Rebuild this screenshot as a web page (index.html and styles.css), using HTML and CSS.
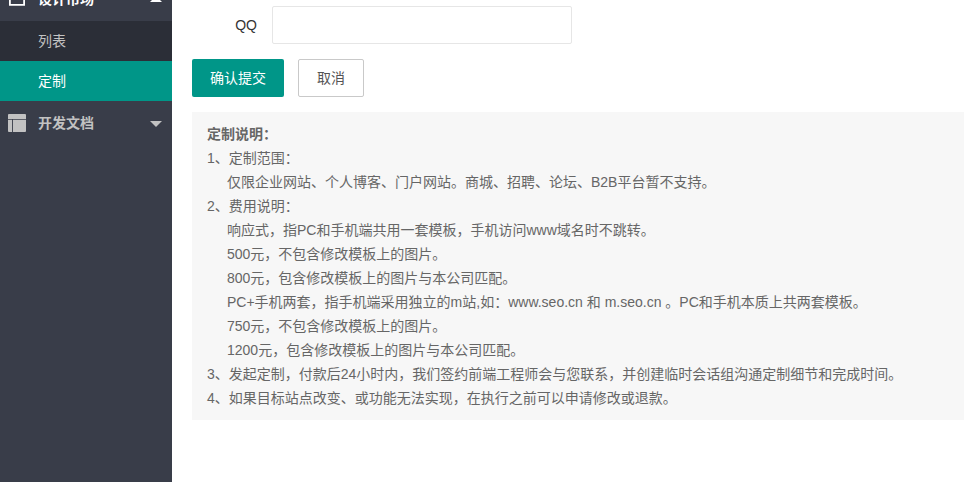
FILE: index.html
```html
<!DOCTYPE html>
<html lang="zh-CN">
<head>
    <meta charset="UTF-8">
    <title>定制</title>
    <link rel="stylesheet" href="styles.css">
</head>
<body>
<div class="side">
    <div class="nav-item nav-top">
        <svg class="nav-icon" viewBox="0 0 20 20"><path d="M2.1 0H17.9V16.5H2.1z" fill="none" stroke="#fff" stroke-width="2"/></svg>
        <span class="nav-title nav-open">设计市场</span>
        <span class="arrow arrow-up"></span>
    </div>
    <div class="sub-list">
        <div class="sub-item">列表</div>
        <div class="sub-item active">定制</div>
    </div>
    <div class="nav-item">
        <svg class="nav-icon" viewBox="0 0 20 20"><path d="M1 0h18a1 1 0 0 1 1 1v4.5H0V1a1 1 0 0 1 1-1zM0 6.5h4.5V20H1a1 1 0 0 1-1-1zM5.5 6.5H20V19a1 1 0 0 1-1 1H5.5z" fill="#c2c2c2"/></svg>
        <span class="nav-title">开发文档</span>
        <span class="arrow"></span>
    </div>
</div>

<div class="main">
    <div class="form-row">
        <label class="form-label">QQ</label>
        <input class="form-input" type="text">
    </div>
    <div class="btn-row">
        <button class="btn btn-ok">确认提交</button>
        <button class="btn btn-cancel">取消</button>
    </div>
    <div class="notice">
        <p class="notice-title">定制说明：</p>
        <p>1、定制范围：</p>
        <p class="indent">仅限企业网站、个人博客、门户网站。商城、招聘、论坛、B2B平台暂不支持。</p>
        <p>2、费用说明：</p>
        <p class="indent">响应式，指PC和手机端共用一套模板，手机访问www域名时不跳转。</p>
        <p class="indent">500元，不包含修改模板上的图片。</p>
        <p class="indent">800元，包含修改模板上的图片与本公司匹配。</p>
        <p class="indent">PC+手机两套，指手机端采用独立的m站,如：www.seo.cn 和 m.seo.cn 。PC和手机本质上共两套模板。</p>
        <p class="indent">750元，不包含修改模板上的图片。</p>
        <p class="indent">1200元，包含修改模板上的图片与本公司匹配。</p>
        <p>3、发起定制，付款后24小时内，我们签约前端工程师会与您联系，并创建临时会话组沟通定制细节和完成时间。</p>
        <p>4、如果目标站点改变、或功能无法实现，在执行之前可以申请修改或退款。</p>
    </div>
</div>
</body>
</html>
```

FILE: styles.css
```css
html, body {
    margin: 0;
    padding: 0;
    height: 100%;
    overflow: hidden;
}
body {
    display: flex;
    background: #fff;
    color: #666;
    font: 14px/24px "Liberation Sans", "Noto Sans CJK SC", sans-serif;
}
.side {
    width: 172px;
    flex-shrink: 0;
    background: #393d49;
    overflow: hidden;
}
.nav-item {
    height: 44px;
    display: flex;
    align-items: center;
    padding-left: 8px;
    padding-right: 10px;
}
.nav-top {
    margin-top: -23px;
}
.nav-icon {
    width: 18px;
    height: 18px;
    margin-right: 12px;
}
.nav-title {
    flex: 1;
    font-weight: bold;
    color: #c2c2c2;
}
.nav-open {
    color: #fff;
}
.arrow {
    width: 0;
    height: 0;
    margin-top: 2px;
    border: 6px solid transparent;
    border-top-color: #c2c2c2;
    border-bottom-width: 0;
}
.arrow-up {
    margin-top: 0;
    border-top-width: 0;
    border-top-color: transparent;
    border-bottom: 6px solid #fff;
}
.sub-list {
    background: #2b2e37;
}
.sub-item {
    height: 40px;
    line-height: 40px;
    padding-left: 38px;
    color: #c2c2c2;
}
.sub-item.active {
    background: #009688;
    color: #fff;
}
.main {
    flex: 1;
    padding: 6px 0 0 20px;
}
.form-row {
    display: flex;
    align-items: center;
    height: 38px;
}
.form-label {
    width: 65px;
    text-align: right;
    margin-right: 15px;
    color: #333;
}
.form-input {
    width: 300px;
    height: 38px;
    box-sizing: border-box;
    border: 1px solid #e6e6e6;
    border-radius: 2px;
    background: #fff;
}
.btn-row {
    display: flex;
    gap: 14px;
    margin-top: 15px;
}
.btn {
    height: 38px;
    box-sizing: border-box;
    border-radius: 2px;
    font: inherit;
    padding: 0 18px;
}
.btn-ok {
    border: none;
    background: #009688;
    color: #fff;
}
.btn-cancel {
    border: 1px solid #c9c9c9;
    background: #fff;
    color: #555;
}
.notice {
    margin-top: 15px;
    padding: 10px 15px;
    background: #f7f7f7;
}
.notice p {
    margin: 0;
    white-space: nowrap;
}
.notice-title {
    font-weight: bold;
}
.notice .indent {
    padding-left: 20px;
}
```
